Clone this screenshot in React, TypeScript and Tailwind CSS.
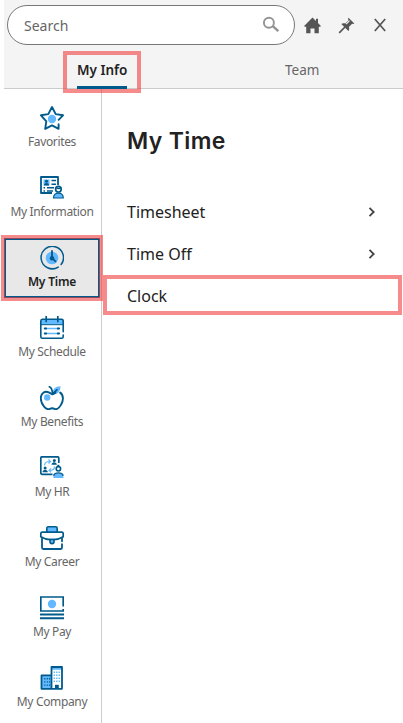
import React, { useState } from 'react';
import { clsx } from 'clsx';

const NAVY = '#005b8c';
const SKY = '#63b9ff';

const FavoritesIcon = () => (
  <svg width="24" height="24" viewBox="0 0 24 24" fill="none">
    <path d="M18.6 18.2v4.6L12 19.4l-6.8 3.5 1.1-7.6L1 9.3l7.3-1.2L12 1l3.7 7.1L23 9.3l-4.4 4.5" stroke={NAVY} strokeWidth="1.9" strokeLinejoin="round" strokeLinecap="round" />
    <circle cx="12" cy="13" r="4.2" fill={SKY} />
  </svg>
);

const InformationIcon = () => (
  <svg width="24" height="24" viewBox="0 0 24 24" fill="none">
    <path d="M12 17H1V1h17v8" stroke={NAVY} strokeWidth="1.8" strokeLinejoin="round" />
    <path d="M3.5 3.5h6v6h-6z" fill={SKY} />
    <circle cx="6.5" cy="5.3" r="1.5" fill={NAVY} />
    <path d="M4 9.5c0-3.2 5-3.2 5 0z" fill={NAVY} />
    <path d="M11.5 4.5H16M11.5 8.3H16M7 11.7h7M7 15h6M3.5 11.7H5M3.5 15H5" stroke={NAVY} strokeWidth="1.4" />
    <circle cx="18.4" cy="13.2" r="2.8" fill="#fff" stroke={NAVY} strokeWidth="1.7" />
    <path d="M16.5 12.4h3.8" stroke={NAVY} strokeWidth="1.5" />
    <path d="M13.5 22c0-6.6 9.8-6.6 9.8 0z" fill={SKY} stroke={NAVY} strokeWidth="1.2" />
  </svg>
);

const TimeIcon = () => (
  <svg width="24" height="24" viewBox="0 0 24 24" fill="none">
    <circle cx="12" cy="12" r="6.3" fill={SKY} />
    <path d="M18.2 21.1A11.2 11.2 0 1 1 21.1 18.5" stroke={NAVY} strokeWidth="1.5" strokeLinecap="round" />
    <path d="M12 4.2V12l4 3.8" stroke={NAVY} strokeWidth="1.8" />
    <circle cx="12" cy="12.3" r="2.2" fill={NAVY} />
  </svg>
);

const ScheduleIcon = () => (
  <svg width="24" height="24" viewBox="0 0 24 24" fill="none">
    <path d="M1 3h22v5.5H1z" fill={SKY} />
    <path d="M23.2 15.8V5c0-1-.5-1.7-1.5-1.7H2.3C1.3 3.3.8 4 .8 5v15.5c0 1 .5 1.7 1.5 1.7h19.4c1 0 1.5-.7 1.5-1.7V19" stroke={NAVY} strokeWidth="1.6" strokeLinecap="round" />
    <path d="M1 8.7h22" stroke={NAVY} strokeWidth="1" />
    <path d="M6.2.5v5M17.8.5v5" stroke={NAVY} strokeWidth="1.7" strokeLinecap="round" />
    <path d="M5 12.5h14M5 17.5h14" stroke={SKY} strokeWidth="1.6" />
    <path d="M4.7 12.5h1.5M17.7 12.5h1.5M4.7 17.5h1.5M17.7 17.5h1.5" stroke={NAVY} strokeWidth="1.8" strokeLinecap="round" />
  </svg>
);

const BenefitsIcon = () => (
  <svg width="24" height="24" viewBox="0 0 24 24" fill="none">
    <circle cx="7.2" cy="11.5" r="3.2" fill={SKY} />
    <path d="M12.5 8.4C12.5 3 15.5.2 20.500.3c0 5.3-3 8.4-8 8.1z" fill={SKY} />
    <path d="M9.4.8c2 .9 3 2.8 3 7.2M12.4 8.2l4.5-4.4" stroke={NAVY} strokeWidth="1.7" strokeLinecap="round" />
    <path d="M20.2 6.6c3.5 2.3 3.4 8.3.9 12-1.9 3.4-4.1 5.5-6.6 4.2-1.6-.8-3-.8-4.6 0C6.5 24.6.8 18.4.8 12.3c0-5.4 4-7.6 8-5.9l3.6 1.9 2.9-1.5" stroke={NAVY} strokeWidth="1.9" strokeLinecap="round" strokeLinejoin="round" />
  </svg>
);

const HrIcon = () => (
  <svg width="24" height="24" viewBox="0 0 24 24" fill="none">
    <path d="M12.5 18.3H2.3C1.3 18.3.8 17.8.8 17V2C.8 1.3 1.3.8 2 .8h15.5c.8 0 1.3.5 1.3 1.3v5" stroke={NAVY} strokeWidth="1.7" />
    <path d="M4.5 9.5c.2-3 2.3-4.2 5.5-4M8.5 3.5l2 2-2 2M14.5 10.5c0 2.5-2 4-5 4M11 12.3l-2 2.2 2 1.8" stroke={SKY} strokeWidth="1.2" />
    <circle cx="14.3" cy="4.5" r="1.5" fill={NAVY} />
    <path d="M11.5 8.7c0-3.4 5.3-3.4 5.3 0z" fill={NAVY} />
    <circle cx="5.1" cy="12" r="1.5" fill={NAVY} />
    <path d="M2.5 16.2c0-3.4 5.3-3.4 5.3 0z" fill={NAVY} />
    <circle cx="18.4" cy="12.8" r="2.2" fill="#fff" stroke={NAVY} strokeWidth="1.6" />
    <path d="M18.3 8.8v2" stroke={NAVY} strokeWidth="2" />
    <path d="M13.3 22c0-6.2 10.2-6.2 10.2 0z" fill={SKY} />
    <path d="M13.5 19.7c1.5-3.8 8.3-3.8 9.8 0" stroke={NAVY} strokeWidth="1.3" />
  </svg>
);

const CareerIcon = () => (
  <svg width="24" height="24" viewBox="0 0 24 24" fill="none">
    <path d="M7 1h10v5H7z" fill={SKY} />
    <path d="M6.8 6V2.4c0-1 .5-1.6 1.5-1.6h7.4c1 0 1.5.6 1.5 1.6V6" stroke={NAVY} strokeWidth="1.6" />
    <path d="M2.2 6.2h19.6c.9 0 1.4.5 1.4 1.4v3.2c-3 1.8-6.2 2.7-9.3 2.9h-3.8C7 13.5 3.8 12.6.8 10.8V7.6c0-.9.5-1.4 1.4-1.4z" fill="#fff" stroke={NAVY} strokeWidth="1.7" />
    <path d="M2 12.5v9c0 1 .4 1.5 1.3 1.5h17.4c.9 0 1.3-.5 1.3-1.5v-3.3M22 12.5v2.8" stroke={NAVY} strokeWidth="1.8" strokeLinecap="round" />
    <path d="M10 13.5h4v2.2c0 2.5-4 2.5-4 0z" fill={SKY} stroke={NAVY} strokeWidth="1.6" />
  </svg>
);

const PayIcon = () => (
  <svg width="24" height="24" viewBox="0 0 24 24" fill="none">
    <path d="M23.2 10.5V1H.8v14h22.4v-2" stroke={NAVY} strokeWidth="1.7" />
    <circle cx="12" cy="8" r="4.2" fill={SKY} />
    <path d="M0 18.5h24M0 22.3h24" stroke={NAVY} strokeWidth="1.9" />
  </svg>
);

const CompanyIcon = () => (
  <svg width="24" height="24" viewBox="0 0 24 24" fill="none">
    <path d="M1.5 9.3h10v13.5h-10z" fill={SKY} />
    <path d="M11.5 1h11v21.8h-11z" fill="#fff" />
    <path d="M12 1.5h10v2.3H12z" fill={SKY} />
    <path d="M11.5 22.8V1H22v21.8M11.5 9.3h-10v13.5h21" stroke={NAVY} strokeWidth="1.8" strokeLinejoin="round" />
    <path d="M4.8 12v8M7.3 12v8M9.5 12v8" stroke={NAVY} strokeWidth="1.2" strokeDasharray="1.4 1.8" />
    <path d="M14.3 5.5V17M16.8 5.5V17M19.3 5.5V17" stroke={SKY} strokeWidth="1.4" strokeDasharray="1.4 1.6" />
    <path d="M15 18.8h3.8V23H15z" fill={NAVY} />
  </svg>
);

const navigation = [
  { name: 'Favorites', icon: FavoritesIcon },
  { name: 'My Information', icon: InformationIcon },
  { name: 'My Time', icon: TimeIcon },
  { name: 'My Schedule', icon: ScheduleIcon },
  { name: 'My Benefits', icon: BenefitsIcon },
  { name: 'My HR', icon: HrIcon },
  { name: 'My Career', icon: CareerIcon },
  { name: 'My Pay', icon: PayIcon },
  { name: 'My Company', icon: CompanyIcon }
];

const links = [
  { name: 'Timesheet', hasChildren: true },
  { name: 'Time Off', hasChildren: true },
  { name: 'Clock', hasChildren: false }
];

const App: React.FC = () => {
  const [active, setActive] = useState('My Time');

  return (
    <div className="flex h-[723px] w-[403px] flex-col overflow-hidden bg-white pl-1 font-['Noto_Sans',sans-serif] text-[#222]">
      {/* Header */}
      <header className="flex h-[89px] shrink-0 flex-col border-b border-[#ccc] bg-[#f4f4f4]">
        <div className="mb-px flex h-[50px] items-center pl-[3px]">
          <div className="flex h-10 w-[288px] items-center justify-between rounded-full border border-[#777] bg-white pr-[14px] pl-4">
            <input type="text" placeholder="Search" className="w-48 pt-px text-sm outline-none placeholder:text-[#666]" />
            <svg width="18" height="18" viewBox="0 0 18 18" fill="none" stroke="#949494">
              <circle cx="6.9" cy="6.7" r="5" strokeWidth="1.9" />
              <path d="M10.800 10.200l5.500 5" strokeWidth="2.5" />
            </svg>
          </div>
          <button className="ml-[9px]">
            <svg width="17" height="17" viewBox="0 0 17 17" fill="#555">
              <path d="M8.5.4L12 3.9V1.8h2v4.1l2.9 3-.6.9h-1.500v6.400h-4.300v-4.600h-4v4.600H2.200V9.800H.7l-.6-.9z" />
            </svg>
          </button>
          <button className="ml-[17px]">
            <svg width="17" height="17" viewBox="0 0 17 17" fill="none">
              <path d="M10.5.7l5.8 5.8-1.200.6-1-.4-3.200 3.300c.6 1.800.4 3-.5 4.100L3.300 7C4.500 6 5.800 5.900 7.300 6.500l3.200-3.300-.5-1.400z" fill="#555" />
              <path d="M7 10l-5.800 5.800" stroke="#555" strokeWidth="1.7" />
              <path d="M11.500 3.700L8.200 7" stroke="#f4f4f4" strokeWidth="1.1" />
            </svg>
          </button>
          <button className="ml-[19px]">
            <svg width="12" height="14" viewBox="0 0 12 14" stroke="#555" strokeWidth="1.7">
              <path d="M.8 1l10.400 12M11.200 1L.8 13" />
            </svg>
          </button>
        </div>
        <div className="flex h-[37px] text-[13.5px] leading-5">
          <div className="relative ml-[59px] h-[42px] w-[78px] shrink-0 border-4 border-[#ee3e3e]/60 px-[10px]">
            <div className="h-[34px] border-b-[3px] border-[#005b8c] pt-[5px] text-center font-semibold whitespace-nowrap">
              My Info
            </div>
          </div>
          <span className="ml-[144px] pt-[9px] text-[#666]">Team</span>
        </div>
      </header>

      <div className="flex min-h-0 flex-1">
        {/* Sidebar */}
        <nav className="flex w-[98px] shrink-0 flex-col gap-[10px] border-r border-[#ccc] pt-[9px]">
          {navigation.map((item) => {
            const isActive = active === item.name;
            return (
              <button
                key={item.name}
                onClick={() => setActive(item.name)}
                className={clsx(
                  "relative flex h-[60px] w-24 shrink-0 flex-col items-center pt-2 text-xs leading-4 whitespace-nowrap",
                  isActive ? "bg-[#e8e8e8] font-semibold tracking-[-0.2px]" : "tracking-[-0.35px] text-[#666]"
                )}
              >
                <item.icon />
                <span className="mt-1">{item.name}</span>
                {isActive && (
                  <>
                    <span className="absolute inset-0 border-2 border-[#005b8c]" />
                    <span className="absolute -top-[3px] -right-[3px] -bottom-[3px] -left-[3px] border-4 border-[#ee3e3e]/60" />
                  </>
                )}
              </button>
            );
          })}
        </nav>

        {/* Main Content */}
        <main className="flex-1 pt-9">
          <h1 className="ml-[25px] font-['Inter',sans-serif] text-[23px] leading-8 font-semibold tracking-[0.35px]">My Time</h1>
          <ul className="mt-[34px] pl-px">
            {links.map((link) => (
              <li
                key={link.name}
                className={clsx(
                  "flex items-center justify-between text-base",
                  link.hasChildren ? "h-[42px] pr-[27px] pl-6" : "h-10 w-[299px] border-4 border-[#ee3e3e]/60 pt-0.5 pl-5"
                )}
              >
                {link.name}
                {link.hasChildren && (
                  <svg className="mb-px" width="8" height="10" viewBox="0 0 8 10" fill="none" stroke="#444" strokeWidth="1.8">
                    <path d="M1.500.8L5.700 5 1.500 9.200" />
                  </svg>
                )}
              </li>
            ))}
          </ul>
        </main>
      </div>
    </div>
  );
};

export default App;
